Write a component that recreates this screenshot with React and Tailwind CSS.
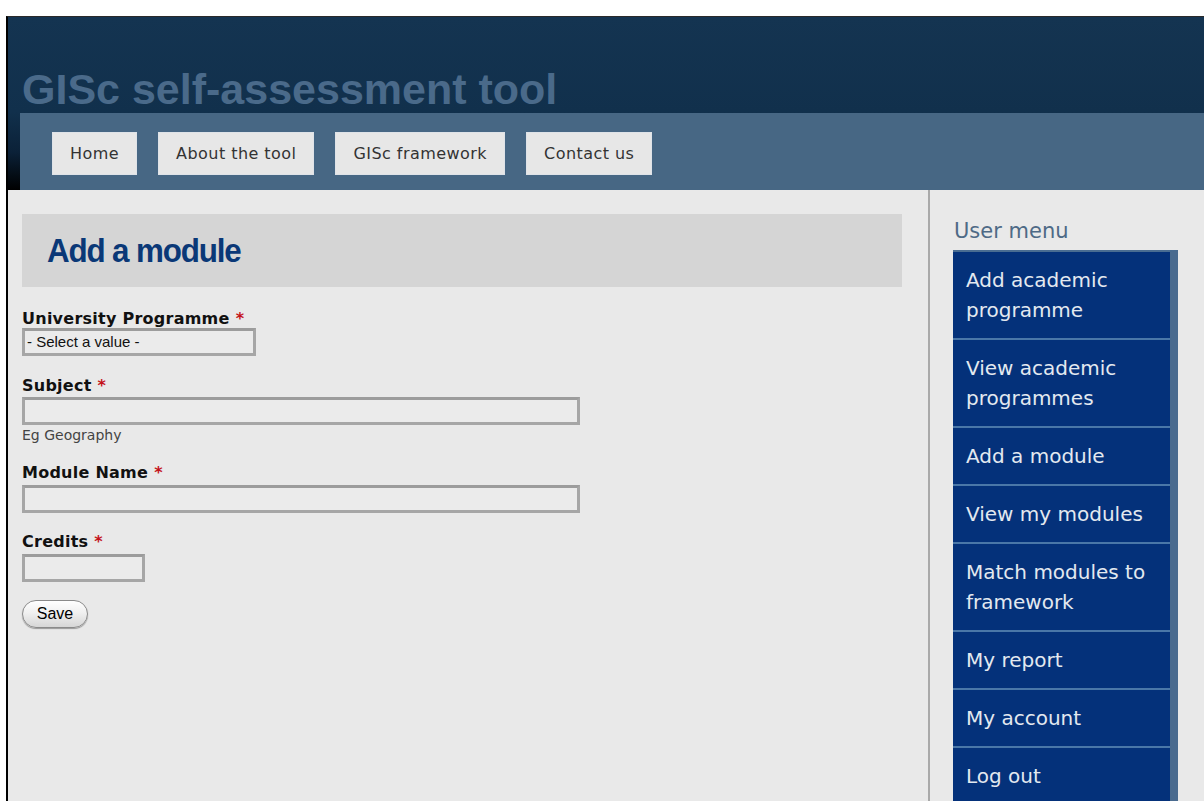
import React from 'react'

const navLinks = ['Home', 'About the tool', 'GISc framework', 'Contact us']

const userMenu = [
  'Add academic programme',
  'View academic programmes',
  'Add a module',
  'View my modules',
  'Match modules to framework',
  'My report',
  'My account',
  'Log out',
]

const Required = () => <span className="ml-[6px] text-[#c4121a]">*</span>

const Field = ({ label, hint, className = '', children }) => (
  <div className={className}>
    <label className="block text-[16px] leading-[19px] font-bold tracking-[0.25px] text-[#111] font-['DejaVu_Sans',sans-serif]">
      {label}
      <Required />
    </label>
    {children}
    {hint && (
      <p className="mt-[2px] text-[14px] leading-[16px] text-[#444] font-['DejaVu_Sans',sans-serif]">{hint}</p>
    )}
  </div>
)

const TextBox = ({ width }) => (
  <input
    type="text"
    className={`block h-[28px] ${width} border-[3px] border-[#a6a6a6] border-t-[#9c9c9c] bg-[#ebebeb] outline-none`}
  />
)

const App = () => {
  return (
    <div className="min-h-screen bg-white pt-[16px] pl-[6px]">
      <div className="min-h-[785px] border-t border-l-2 border-t-[#2a2a2a] border-l-black bg-[#e9e9e9]">
        {/* Header */}
        <div className="bg-[linear-gradient(180deg,#143451_0%,#11304c_55%,#0b2138_78%,#000_100%)]">
          <div className="flex h-[96px] items-end pb-[2px] pl-[14px]">
            <h1 className="text-[43px] leading-none font-bold text-[#4a6a8a] font-['Liberation_Sans',Arial,sans-serif]">
              GISc self-assessment tool
            </h1>
          </div>
          <div className="ml-[12px] flex h-[77px] items-start gap-[21px] bg-[#476784] pt-[19px] pl-[32px]">
            {navLinks.map((link) => (
              <a
                key={link}
                href="#"
                className="flex h-[43px] items-center border border-[#dfe3e8] bg-[#e7e7e7] px-[17px] text-[16px] tracking-[0.45px] text-[#333] font-['DejaVu_Sans',sans-serif]"
              >
                {link}
              </a>
            ))}
          </div>
        </div>

        {/* Body */}
        <div className="flex">
          <main className="w-[920px] pt-[24px] pr-[26px] pl-[14px]">
            <div className="flex h-[73px] items-center bg-[#d5d5d5] pl-[25px]">
              <h2 className="origin-left scale-x-[0.95] text-[33px] leading-none font-bold tracking-[-1.2px] text-[#0a3877] font-['Liberation_Sans',Arial,sans-serif]">
                Add a module
              </h2>
            </div>

            <form className="pt-[22px]">
              <Field label="University Programme">
                <select className="block h-[28px] w-[234px] appearance-none border-[3px] border-[#a6a6a6] border-t-[#9c9c9c] bg-[#ebebeb] pl-[2px] text-[15px] text-[#111] font-['Liberation_Sans',Arial,sans-serif] outline-none">
                  <option>- Select a value -</option>
                </select>
              </Field>

              <Field label="Subject" hint="Eg Geography" className="mt-[20px]">
                <div className="mt-[2px]">
                  <TextBox width="w-[558px]" />
                </div>
              </Field>

              <Field label="Module Name" className="mt-[20px]">
                <div className="mt-[3px]">
                  <TextBox width="w-[558px]" />
                </div>
              </Field>

              <Field label="Credits" className="mt-[19px]">
                <div className="mt-[3px]">
                  <TextBox width="w-[123px]" />
                </div>
              </Field>

              <button
                type="button"
                className="mt-[18px] h-[28px] w-[66px] rounded-full border border-[#8a8a8a] bg-[linear-gradient(180deg,#ffffff_0%,#f0f0f0_45%,#d6d6d6_100%)] text-[16px] text-black shadow-[0_1px_1px_rgba(0,0,0,0.35)] font-['Liberation_Sans',Arial,sans-serif]"
              >
                Save
              </button>
            </form>
          </main>

          {/* Sidebar */}
          <aside className="min-h-[611px] border-l-2 border-[#a9a9a9] pt-[28px] pl-[23px]">
            <h3 className="pl-[1px] text-[21px] leading-[26px] text-[#4e6a86] font-['DejaVu_Sans',sans-serif]">User menu</h3>
            <ul className="mt-[6px] w-[225px] border-t-2 border-r-[8px] border-t-[#4a6d92] border-r-[#4a6b8f] bg-[#04317a]">
              {userMenu.map((item) => (
                <li
                  key={item}
                  className="border-b-2 border-[#4a77a8] py-[13px] pr-[8px] pl-[13px] text-[20px] leading-[30px] text-[#e3e9f0] font-['DejaVu_Sans',sans-serif]"
                >
                  {item}
                </li>
              ))}
            </ul>
          </aside>
        </div>
      </div>
    </div>
  )
}

export default App
